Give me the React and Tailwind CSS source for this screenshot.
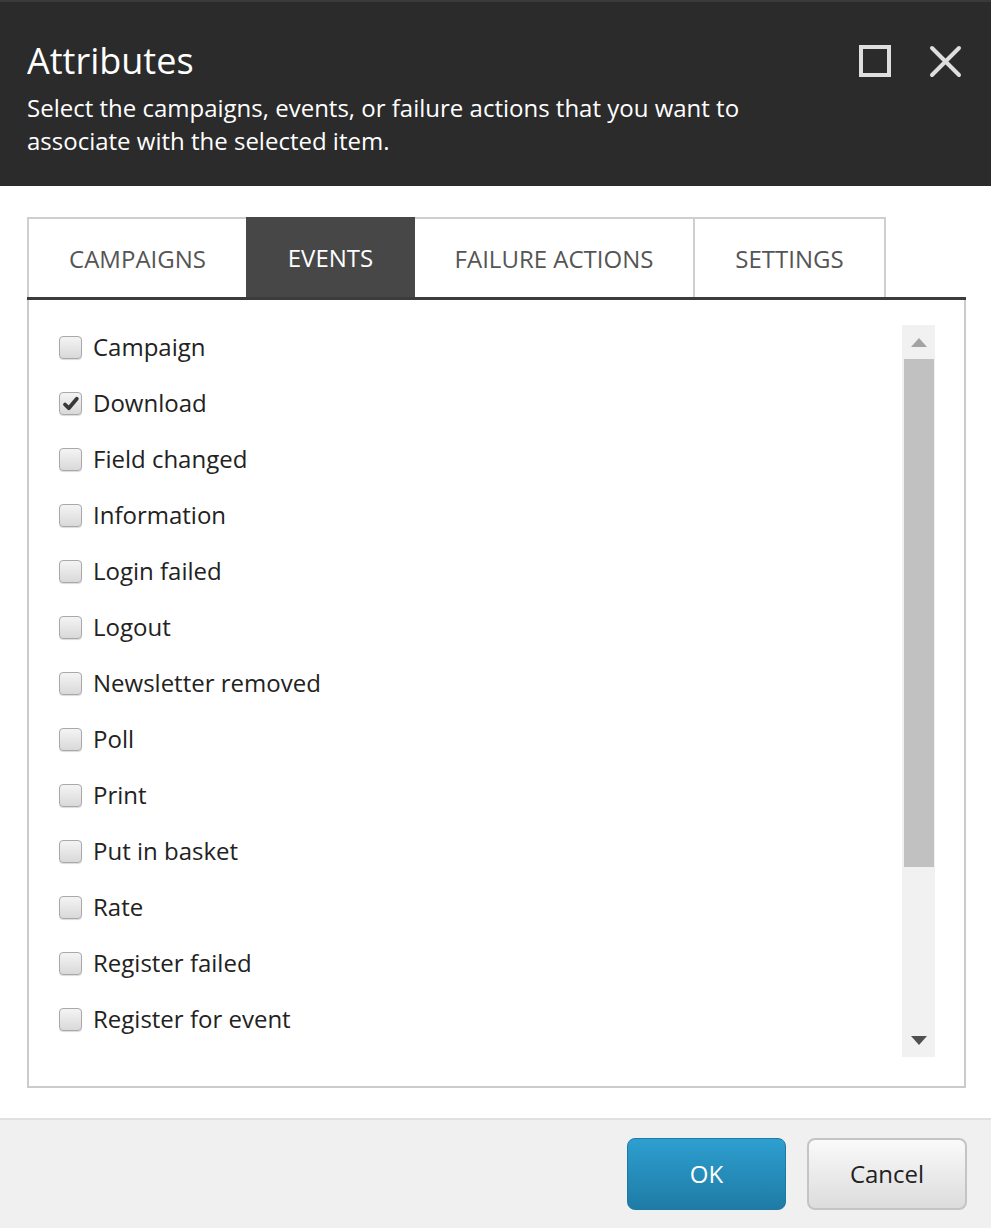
import React from "react";

const items = [
  ["Campaign", false],
  ["Download", true],
  ["Field changed", false],
  ["Information", false],
  ["Login failed", false],
  ["Logout", false],
  ["Newsletter removed", false],
  ["Poll", false],
  ["Print", false],
  ["Put in basket", false],
  ["Rate", false],
  ["Register failed", false],
  ["Register for event", false],
];

function Checkbox({ checked }) {
  return (
    <div className="relative w-[23px] h-[23px] rounded-[4px] border border-[#a9a9a9] bg-gradient-to-b from-[#f4f4f4] to-[#d9d9d9] shadow-[0_1px_1px_rgba(0,0,0,0.15)] shrink-0">
      {checked && (
        <svg className="absolute left-[2px] top-[2px]" width="18" height="18" viewBox="0 0 18 18">
          <path d="M3 9.5 L6.8 13.2 L14.8 3.8" fill="none" stroke="#383838" strokeWidth="3.8" strokeLinecap="round" strokeLinejoin="round" />
        </svg>
      )}
    </div>
  );
}

export default function App() {
  return (
    <div className="w-[991px] h-[1228px] flex flex-col bg-white font-['Open_Sans',sans-serif] overflow-hidden">
      {/* Header */}
      <div className="h-[186px] bg-[#2b2b2b] border-t-2 border-[#3a3a3a] px-[27px] pt-[35px] flex justify-between shrink-0">
        <div className="flex flex-col">
          <div className="text-[36px] leading-[48px] text-white">Attributes</div>
          <div className="mt-[6px] text-[24px] leading-[33px] text-white w-[740px]">
            Select the campaigns, events, or failure actions that you want to associate with the selected item.
          </div>
        </div>
        <div className="flex items-start gap-[38px] pt-[8px] pr-[2px]">
          <svg width="32" height="32" viewBox="0 0 32 32">
            <rect x="2" y="2" width="28" height="28" fill="none" stroke="#dedede" strokeWidth="4" />
          </svg>
          <svg width="33" height="33" viewBox="0 0 33 33">
            <path d="M3 3 L30 30 M30 3 L3 30" stroke="#dedede" strokeWidth="4" strokeLinecap="round" />
          </svg>
        </div>
      </div>

      {/* Body */}
      <div className="flex-1 flex flex-col pt-[31px] pl-[27px] pr-[25px]">
        <div className="flex h-[80px]">
          <div className="w-[219px] pt-[2px] border-t-2 border-l-2 border-[#cfcfcf] flex items-center justify-center text-[24px] text-[#555] uppercase">Campaigns</div>
          <div className="w-[169px] pt-[2px] bg-[#474747] flex items-center justify-center text-[24px] text-white uppercase">Events</div>
          <div className="w-[280px] pt-[2px] border-t-2 border-r-2 border-[#cfcfcf] flex items-center justify-center text-[24px] text-[#555] uppercase">Failure actions</div>
          <div className="w-[191px] pt-[2px] border-t-2 border-r-2 border-[#cfcfcf] flex items-center justify-center text-[24px] text-[#555] uppercase">Settings</div>
        </div>
        <div className="h-[3px] bg-[#3c3c3c]" />
        <div className="h-[788px] border-2 border-t-0 border-[#cbcbcb] flex">
          <div className="flex-1 pt-[19px] pl-[30px]">
            {items.map(([label, checked]) => (
              <div key={label} className="h-[56px] flex items-center gap-[11px]">
                <Checkbox checked={checked} />
                <span className="text-[24px] text-[#222]">{label}</span>
              </div>
            ))}
          </div>
          <div className="w-[33px] mt-[25px] mb-[29px] mr-[29px] bg-[#f1f1f1] flex flex-col items-center">
            <div className="h-[34px] flex items-center justify-center">
              <svg width="16" height="9" viewBox="0 0 16 9">
                <path d="M8 0 L16 9 L0 9 Z" fill="#a3a3a3" />
              </svg>
            </div>
            <div className="w-[30px] h-[508px] bg-[#c1c1c1]" />
            <div className="flex-1 flex items-end justify-center pb-[12px]">
              <svg width="16" height="9" viewBox="0 0 16 9">
                <path d="M0 0 L16 0 L8 9 Z" fill="#505050" />
              </svg>
            </div>
          </div>
        </div>
      </div>

      {/* Footer */}
      <div className="h-[110px] shrink-0 bg-[#f0f0f0] border-t-2 border-[#e0e0e0] flex items-start justify-end gap-[21px] pt-[18px] pr-[24px]">
        <button className="w-[159px] h-[72px] rounded-[8px] bg-gradient-to-b from-[#2d9fd0] to-[#1f7ba6] border border-[#1d7aa3] text-white text-[24px]">OK</button>
        <button className="w-[160px] h-[72px] rounded-[8px] bg-gradient-to-b from-[#fafafa] to-[#dcdcdc] border-2 border-[#c4c4c4] text-[#222] text-[24px]">Cancel</button>
      </div>
    </div>
  );
}
